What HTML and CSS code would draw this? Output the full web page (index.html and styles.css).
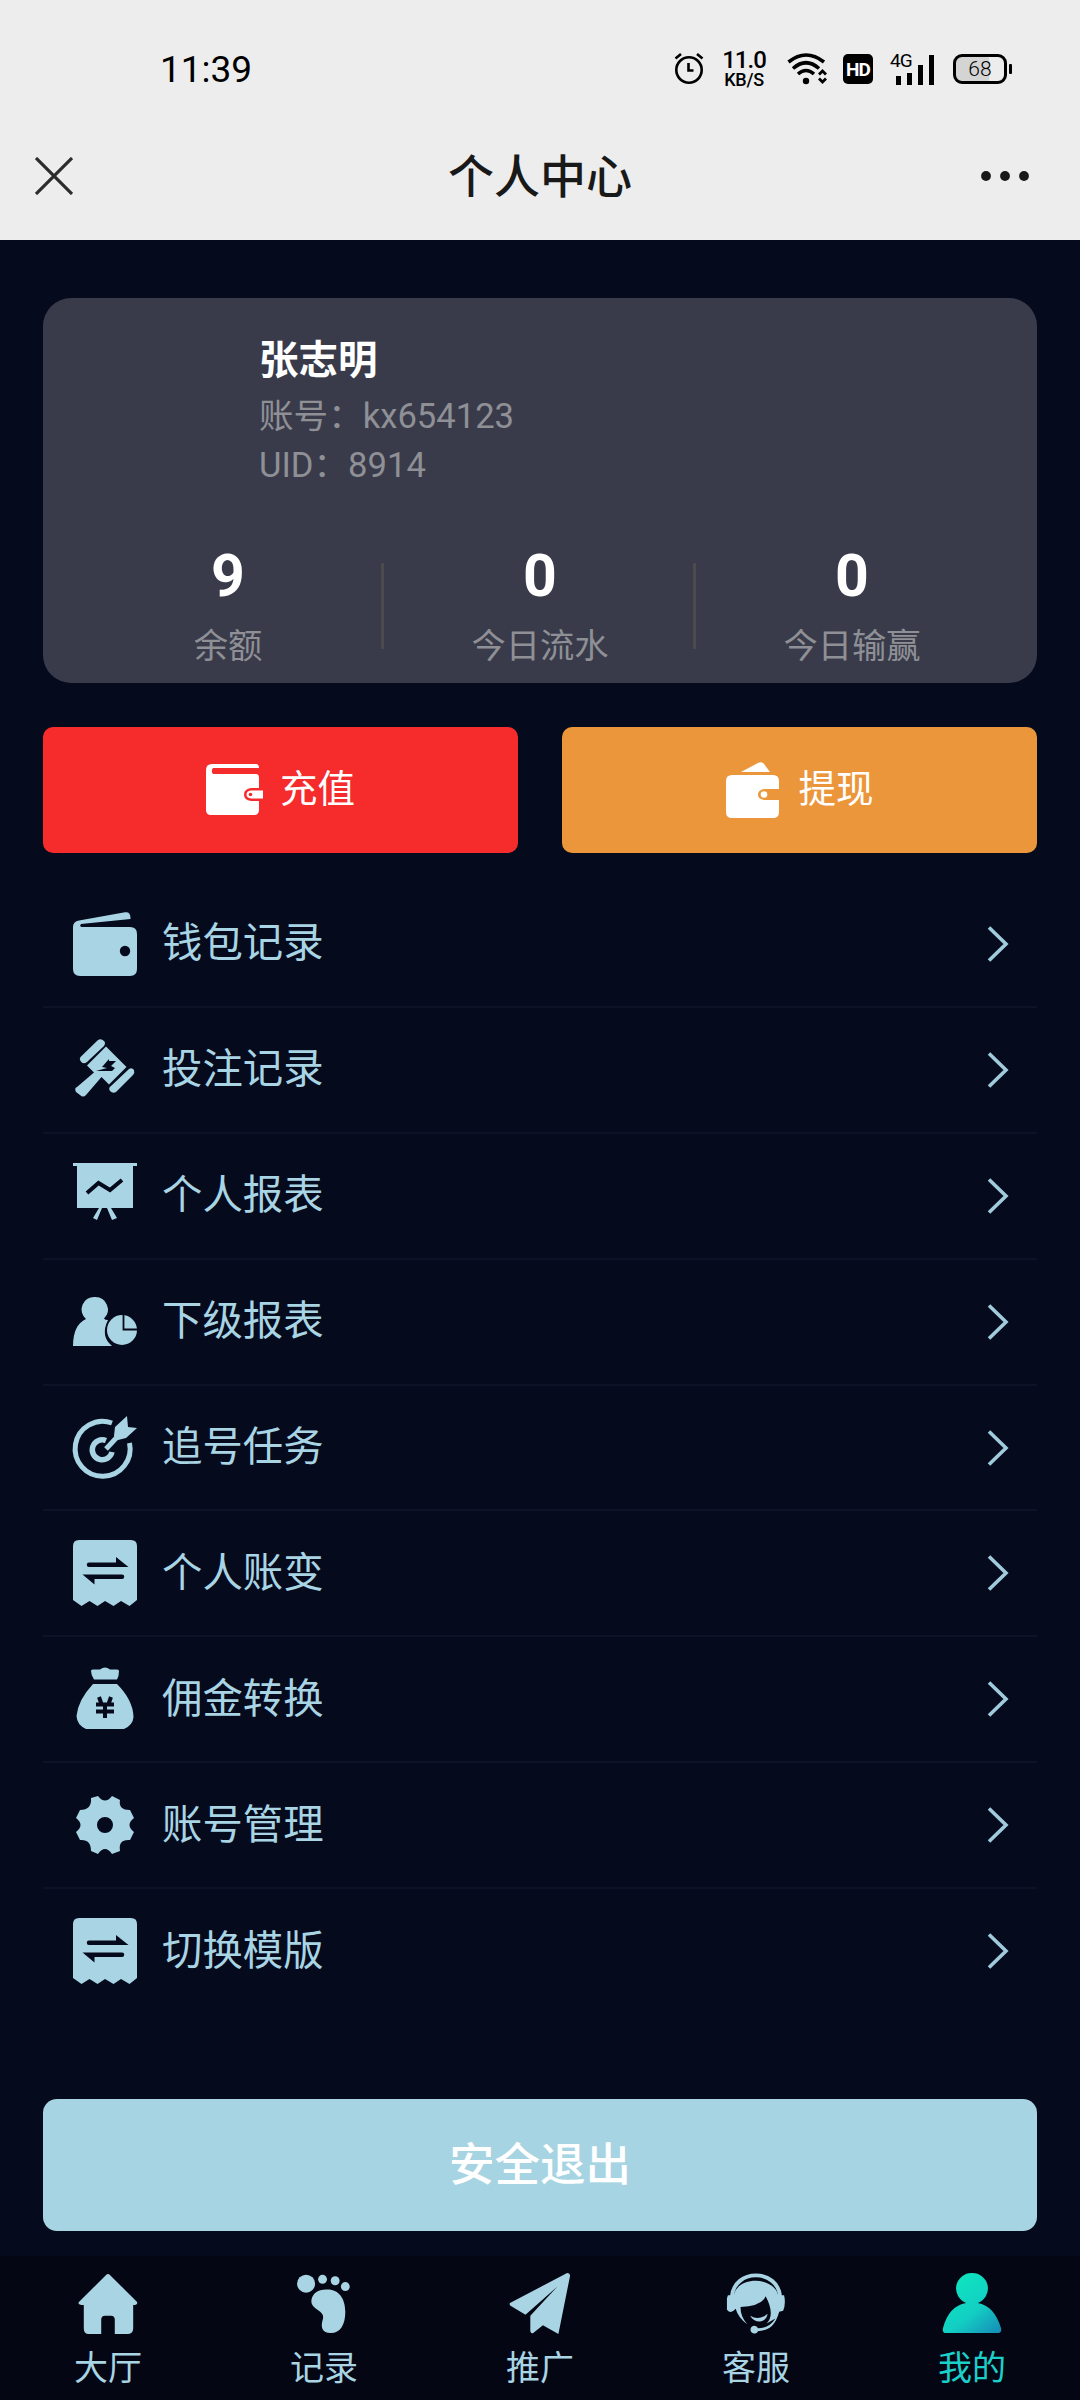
FILE: index.html
```html
<!DOCTYPE html>
<html lang="zh-CN">
<head>
<meta charset="utf-8">
<title>个人中心</title>
<link rel="stylesheet" href="styles.css">
</head>
<body>
<svg class="defs" width="0" height="0" aria-hidden="true">
  <defs>
    <linearGradient id="teal" gradientUnits="userSpaceOnUse" x1="18" y1="14" x2="56" y2="62">
      <stop offset="0" stop-color="#0fe0c0"/><stop offset=".5" stop-color="#12cfc3"/><stop offset="1" stop-color="#1690b8"/>
    </linearGradient>
    <symbol id="receipt" viewBox="0 0 64 66">
      <path fill="currentColor" d="M6 0H58Q64 0 64 6V60L56.500 66L48 61L40.500 66L32 61L24.500 66L16.500 61L8.500 66L0 60V6Q0 0 6 0Z"/>
      <path fill="#05091c" d="M16 22.500H43V17L55.500 27H16A2.200 2.200 0 0 1 16 22.500ZM49 34.500H9.500L21.500 44.500V39H49A2.200 2.200 0 0 0 49 34.500Z"/>
    </symbol>
    <symbol id="chevron" viewBox="0 0 22 36">
      <path fill="none" stroke="#a0cbdc" stroke-width="3.600" d="M2 1.500L19 18L2 34.500"/>
    </symbol>
  </defs>
</svg>
<header class="top">
  <div class="status">
    <span class="clock">11:39</span>
    <div class="status-icons">
      <svg class="alarm" width="30" height="34" viewBox="0 0 30 34" fill="none" stroke="#000" stroke-width="2.600"><circle cx="15" cy="18" r="12.700"/><path d="M14.500 11V18.500H19.500M1.500 6.500L7 2M28.500 6.500L23 2"/></svg>
      <div class="speed"><b>11.0</b><span>KB/S</span></div>
      <svg class="wifi" width="42" height="32" viewBox="0 0 42 32" fill="none" stroke="#000" stroke-width="3.600"><path d="M1.500 9Q19-5 37 9M6 15.500Q19 4 32 15.500M11 21Q19 14 27 21"/><circle cx="19" cy="28" r="3.200" fill="#000" stroke="none"/><path stroke-width="2.800" d="M32 21.500L35.500 18L39 21.500M32 25.500L35.500 29L39 25.500"/></svg>
      <span class="hd">HD</span>
      <div class="signal"><span>4G</span><svg width="45" height="31" viewBox="0 0 45 31"><path stroke="#000" stroke-width="5" d="M8.500 22V31M19.500 19V31M30.500 11V31M41.500 1V31"/></svg></div>
      <div class="battery"><span>68</span></div>
    </div>
  </div>
  <div class="titlebar">
    <svg width="38" height="38" viewBox="0 0 38 38" stroke="#2c2c2c" stroke-width="3.200"><path d="M1 1L37 37M37 1L1 37"/></svg>
    <h1>个人中心</h1>
    <svg width="48" height="10" viewBox="0 0 48 10" fill="#191919"><circle cx="5" cy="5" r="4.900"/><circle cx="24" cy="5" r="4.900"/><circle cx="43" cy="5" r="4.900"/></svg>
  </div>
</header>
<main>
  <section class="card">
    <div class="profile"><h2>张志明</h2><p>账号：<span>kx654123</span></p><p>UID：<span>8914</span></p></div>
    <div class="stats">
      <div><b>9</b><span>余额</span></div>
      <div><b>0</b><span>今日流水</span></div>
      <div><b>0</b><span>今日输赢</span></div>
    </div>
  </section>
  <section class="actions">
    <button class="deposit"><svg width="58" height="52" viewBox="0 0 58 52"><path fill="#fff" d="M6 0H50Q53 0 53 4H7Q4.500 7 7 10H50Q53 10 53 14V24H45Q38 25 38 30.500Q38 36 45 37H53V46Q53 51 48 51H5Q0 51 0 46V6Q0 0 6 0ZM45 26.500H57V34.500H45Q40.500 34 40.500 30.500Q40.500 27 45 26.500Z"/><circle cx="44.500" cy="30.500" r="1.800" fill="#f62c2c"/></svg><span>充值</span></button>
    <button class="withdraw"><svg width="54" height="56" viewBox="0 0 54 56"><path fill="#fff" d="M15 10L32 1Q36-1 38 2L44 10ZM6 13H47Q53 13 53 19V27H38Q32 28 32 32.500Q32 37 38 38H53V50Q53 56 47 56H6Q0 56 0 50V19Q0 13 6 13Z"/><circle cx="38" cy="32.500" r="3.300" fill="#fff"/></svg><span>提现</span></button>
  </section>
  <nav class="menu">
    <a><svg class="ico" viewBox="0 0 64 64"><path fill="currentColor" d="M6 8.500L52 .3Q57.500-.5 57.500 6V7L8 12Q6 14.500 9 15H57Q64 15 64 22V57Q64 64 57 64H7Q0 64 0 57V15Q0 9.500 6 8.500Z"/><circle cx="52" cy="39" r="5.200" fill="#05091c"/></svg><span>钱包记录</span><svg class="chev"><use href="#chevron"/></svg></a>
    <a><svg class="ico" viewBox="0 0 64 64"><g fill="currentColor"><path d="M7.500 19L25 2Q28 0 31 3Q33 5 31 8L14 24Q10 27 7.500 23Q6 21 7.500 19ZM33 8.500L53.500 29L36 46.500L28.500 39L13 57Q10 60 7 57L3 54Q1 50 4 49L21 34.500L14 27.500ZM56 31Q59 29 61 32Q62 35 60 37L43 54Q40 56 37 53Q35 50 38 48Z"/></g><path fill="#05091c" d="M36 21L29 29L34 30L23 33L39 33L42 30L38 28L43 23L36 23Z"/></svg><span>投注记录</span><svg class="chev"><use href="#chevron"/></svg></a>
    <a><svg class="ico" viewBox="0 0 64 64"><g transform="translate(0 -5)"><path fill="currentColor" d="M0 4H64V7H60V49H38L44 59L39 61L34 49H29L24 61L20 59L26 49H4V7H0Z"/><path fill="none" stroke="#05091c" stroke-width="4" d="M14 34L25.500 24L37 31L49 21"/></g></svg><span>个人报表</span><svg class="chev"><use href="#chevron"/></svg></a>
    <a><svg class="ico" viewBox="0 0 64 64"><path fill="currentColor" d="M22 7A12.500 12.500 0 0 1 31 28.500Q32 30 35 30Q27 46 39 56H0Q0 35 13 29A12.500 12.500 0 0 1 22 7Z"/><circle cx="49" cy="40" r="15" fill="currentColor"/><path fill="none" stroke="#05091c" stroke-width="1.800" d="M50.500 24V39.500H65"/></svg><span>下级报表</span><svg class="chev"><use href="#chevron"/></svg></a>
    <a><svg class="ico" viewBox="0 0 64 64"><g transform="translate(0 2)"><g fill="none" stroke="currentColor"><path stroke-width="5" d="M39 5A27.500 27.500 0 1 0 56.500 25"/><path stroke-width="5.500" d="M33 22.500A10 10 0 1 0 39 34"/><path stroke-width="5" d="M33 31L46 17"/></g><path fill="currentColor" d="M42 9L54-2L55 9L64 10L53 20L45 22L41 18Z"/></g></svg><span>追号任务</span><svg class="chev"><use href="#chevron"/></svg></a>
    <a><svg class="ico receipt"><use href="#receipt"/></svg><span>个人账变</span><svg class="chev"><use href="#chevron"/></svg></a>
    <a><svg class="ico" viewBox="0 0 64 64"><path fill="currentColor" d="M18 4Q18 2 21 2.500H27Q32-1.500 37 2.500H43Q46 2 46 4Q46 9 44 12.500H21Q18 8 18 4ZM20 17H44Q60 33 60.500 50Q60 58 51 62H13Q4 58 3.500 49Q5 33 20 17Z"/><path fill="none" stroke="#05091c" stroke-width="4" d="M26 30L28.500 37M38 30L35.500 37M23 37.500H41M23 44.500H41M32 37V51"/></svg><span>佣金转换</span><svg class="chev"><use href="#chevron"/></svg></a>
    <a><svg class="ico" viewBox="0 0 64 64"><path fill="currentColor" fill-rule="evenodd" d="M18 5L25 3Q32 12 39 3L47 7Q45 17 57 17L61 25Q52 32 61 39L57 47Q45 46 47 58L39 61Q32 51 25 61L18 58Q18 46 7 47L3 39Q12 32 3 25L7 17Q19 17 18 5ZM32 24A8 8 0 1 0 32 40A8 8 0 1 0 32 24Z"/></svg><span>账号管理</span><svg class="chev"><use href="#chevron"/></svg></a>
    <a><svg class="ico receipt"><use href="#receipt"/></svg><span>切换模版</span><svg class="chev"><use href="#chevron"/></svg></a>
  </nav>
  <button class="logout">安全退出</button>
</main>
<nav class="tabs">
  <a><svg viewBox="0 0 64 64"><path fill="currentColor" d="M30 2Q32 0 34 2L62 30Q63 33 58 33V57Q58 63 52 63H39V48Q39 44 35 44H29Q25 44 25 48V63H12Q7 63 7 57V33Q0 33 2 30Z"/></svg>大厅</a>
  <a><svg viewBox="0 0 64 64"><g fill="currentColor"><circle cx="13.500" cy="11" r="9.300"/><circle cx="30.500" cy="6.500" r="4.600"/><circle cx="43.500" cy="8" r="4.600"/><circle cx="54" cy="14" r="4.600"/><path d="M34 17C47 16 54 26 54 40C54 53 49 62 39 62C30 62 28 56 31 47C33 38 18 38 19 28C20 21 26 17 34 17Z"/></g></svg>记录</a>
  <a><svg viewBox="0 0 64 64"><path fill="currentColor" d="M1 31L60 0Q63 0 63 3L51 63L35 54L25 62Q23 63 22 60V44L50 14L17 43L2 34Q0 33 1 31Z"/></svg>推广</a>
  <a><svg viewBox="0 0 64 64"><path fill="none" stroke="currentColor" stroke-width="4" d="M7 25C9-5 55-5 57 25"/><path fill="currentColor" d="M3 23H9C13 3 50 3 55 23H61Q63 32 60 39L56 40C51 57 44 59 34 60A4 4 0 1 1 34 57Q46 57 52 47L43 52Q52 43 42 24Q38 34 16 35Q16 45 23 53Q14 47 11 37Q6 43 2 38V26Z"/><path fill="currentColor" d="M26 44Q35 50 44 42Q43 49 36 50Q29 50 26 44Z"/></svg>客服</a>
  <a class="active"><svg viewBox="0 0 64 64"><path fill="url(#teal)" d="M32 0A16 16 0 0 1 38 31Q55 34 62 57Q63 62 58 62H5Q1 62 2 57Q8 34 26 31A16 16 0 0 1 32 0Z"/></svg>我的</a>
</nav>
</body>
</html>
```
FILE: styles.css
```css
* { box-sizing: border-box; }
body { margin: 0; width: 1080px; height: 2400px; display: flex; flex-direction: column; overflow: hidden; background: #050a1d; color: #a8d4e4; font-family: Roboto, "Noto Sans CJK SC", sans-serif; }
h1, h2, p { margin: 0; font-weight: 400; }
button { border: 0; padding: 0; color: #fff; font-family: inherit; }
.defs { flex: none; }
.top { height: 240px; flex: none; background: #ededed; color: #000; }
.status { height: 136px; display: flex; align-items: center; justify-content: space-between; padding: 2px 69px 0 160px; }
.clock { font-size: 37px; }
.status-icons { display: flex; align-items: center; }
.alarm { margin-right: 17px; }
.speed { display: flex; flex-direction: column; align-items: center; width: 46px; font-size: 18px; line-height: 18px; font-weight: 500; letter-spacing: -.3px; margin-right: 20px; }
.speed b { font-size: 24px; line-height: 22px; font-weight: 500; letter-spacing: -1px; }
.wifi { margin-right: 14px; }
.hd { width: 30px; height: 30px; border-radius: 5px; background: #000; color: #fff; font-size: 19px; line-height: 31px; font-weight: 700; text-align: center; margin-right: 17px; letter-spacing: -1px; }
.signal { position: relative; width: 45px; height: 31px; margin-right: 18px; }
.signal span { position: absolute; left: 0; top: -3px; font-size: 19px; line-height: 20px; letter-spacing: -1px; }
.signal svg { display: block; }
.battery { position: relative; width: 54px; height: 30px; border: 3px solid #000; border-radius: 9px; background: linear-gradient(90deg, #d4d4d4 68%, #ededed 68%); text-align: center; font-size: 21px; font-weight: 300; line-height: 25px; margin-right: 4px; }
.battery::after { content: ""; position: absolute; left: 53px; top: 7px; width: 3px; height: 10px; border-radius: 1px; background: #000; }
.titlebar { height: 79px; display: grid; grid-template-columns: 48px 1fr 48px; align-items: center; padding: 0 51px 0 35px; }
h1 { font-size: 46px; font-weight: 500; line-height: 66px; color: #191919; text-align: center; padding: 3px 0 0 16px; }
main { flex: none; height: 2016px; padding: 58px 43px 0; display: flex; flex-direction: column; }
.card { height: 385px; flex: none; border-radius: 28px; background: #393b4b; color: #8f9095; }
.profile { padding: 33px 0 0 216px; height: 243px; }
h2 { color: #fff; font-size: 39.500px; line-height: 60px; font-weight: 700; }
.profile p { font-size: 34.600px; line-height: 49px; position: relative; top: 1px; }
.stats { display: grid; grid-template-columns: repeat(3, 312px); justify-content: center; }
.stats div { position: relative; display: flex; flex-direction: column; align-items: center; }
.stats div + div::before { content: ""; position: absolute; left: -3px; top: 22px; width: 3px; height: 86px; background: #4b4b4e; }
.stats b { color: #fff; font-size: 59px; line-height: 70px; font-weight: 700; }
.stats span { font-size: 34.300px; line-height: 50px; margin-top: 10px; }
.actions { display: grid; grid-template-columns: 1fr 1fr; gap: 44px; height: 126px; margin-top: 44px; flex: none; }
.actions button { display: flex; align-items: center; justify-content: center; border-radius: 10px; font-size: 37.500px; }
.actions span { padding-bottom: 9px; }
.deposit { background: #f62c2c; gap: 16px; }
.withdraw { background: #ec963b; gap: 19px; }
.menu { margin-top: 29px; flex: none; }
.menu a { height: 125.900px; display: flex; align-items: center; padding: 0 28px 0 30px; border-bottom: 2px solid #0d1326; }
.menu a:last-child { border-color: transparent; }
.ico { width: 64px; height: 64px; margin-right: 25px; overflow: visible; }
.ico.receipt { height: 66px; }
.menu span { font-size: 40.400px; line-height: 58px; margin-top: 1px; }
.chev { width: 22px; height: 36px; margin-left: auto; }
.logout { height: 132px; margin-top: 83.900px; border-radius: 14px; background: #a6d4e3; font-size: 45.500px; font-weight: 500; flex: none; padding-bottom: 7px; }
.tabs { flex: 1; display: grid; grid-template-columns: repeat(5, 1fr); background: #040613; }
.tabs a { display: flex; flex-direction: column; align-items: center; padding-top: 16px; font-size: 34px; line-height: 50px; }
.tabs svg { width: 62px; height: 64px; margin-bottom: 7px; }
.tabs .active { color: #1cd0ca; }
```
